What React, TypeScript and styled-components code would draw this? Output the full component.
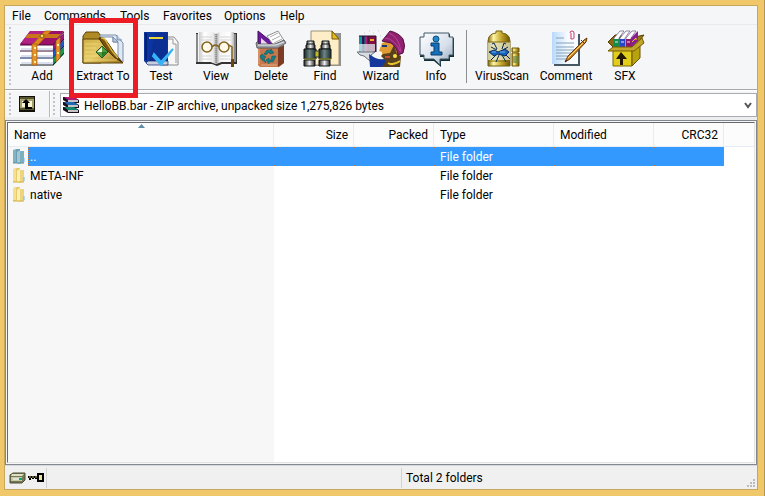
import React from 'react';
import styled, { createGlobalStyle } from 'styled-components';

const GlobalStyle = createGlobalStyle`
  * { box-sizing: border-box; }
  body {
    margin: 0;
    background: #f0c869;
    color: #000;
    font: 12px/18px Roboto, 'Segoe UI', sans-serif;
  }
  button, select { font: inherit; color: inherit; }
  svg { display: block; flex: none; }
`;

const Desktop = styled.div`
  display: flex;
  min-height: 100vh;
  padding: 5px 6px 6px 4px;
  border-right: 1px solid #b3974f;
`;

const Window = styled.main`
  display: flex;
  flex: 1;
  flex-direction: column;
  min-width: 0;
  border: 1px solid #c6a75c;
  background: #f5f6f8;
`;

const MenuBar = styled.nav`
  display: flex;
  gap: 14px;
  height: 19px;
  padding-left: 7px;
  border-bottom: 1px solid #e9eaec;
`;

const MenuItem = styled.button<{ $width: number }>`
  width: ${p => p.$width}px;
  padding: 1px 0 0;
  border: 0;
  background: none;
  text-align: left;
  white-space: nowrap;
`;

const Toolbar = styled.div`
  display: flex;
  height: 65px;
  padding-left: 4px;
  border-bottom: 1px solid #a7a8ae;
`;

const Grip = styled.span`
  flex: none;
  width: 2px;
  margin: 2px 2px 2px 0;
  background: repeating-linear-gradient(#c3c4c7 0 2px, transparent 2px 4px);
`;

const ToolButton = styled.button<{ $width: number }>`
  position: relative;
  display: flex;
  flex: none;
  flex-direction: column;
  align-items: center;
  width: ${p => p.$width}px;
  padding: 5px 0 0;
  border: 0;
  background: none;
  white-space: nowrap;
`;

const Highlight = styled.span`
  position: absolute;
  z-index: 2;
  inset: -7px -3px -9px -2px;
  border: 5px solid #ed1c24;
  pointer-events: none;
`;

const Separator = styled.span`
  flex: none;
  width: 1px;
  margin: 5px 3px 6px;
  background: #8d8e92;
`;

const AddressBar = styled.div`
  display: flex;
  height: 30px;
  padding-left: 4px;
  border-top: 1px solid #fff;
  border-bottom: 3px solid #eceef0;
`;

const UpButton = styled.button`
  flex: none;
  align-self: flex-start;
  width: 36px;
  padding: 5px 0 0 6px;
  border: 0;
  background: none;
`;

const BarDivider = styled.span`
  flex: none;
  width: 2px;
  margin-right: 2px;
  border-left: 1px solid #b5b6ba;
  background: #fff;
`;

const Combo = styled.label`
  position: relative;
  display: flex;
  flex: 1;
  align-items: center;
  gap: 5px;
  height: 24px;
  margin: 2px 0 0 3px;
  padding-left: 2px;
  border: 1px solid #a9aab2;
  background: #fff;
`;

const ComboSelect = styled.select`
  flex: 1;
  min-width: 0;
  height: 22px;
  padding: 1px 0 0;
  border: 0;
  outline: 0;
  appearance: none;
  background: none;
`;

const ComboArrow = styled.svg`
  position: absolute;
  right: 4px;
  top: 8px;
  pointer-events: none;
`;

const ListFrame = styled.section`
  display: flex;
  flex: 1;
  padding: 1px;
  border: 1px solid #828790;
  background: #f5f6f8;
`;

const ListView = styled.div`
  flex: 1;
  min-width: 0;
  border: 1px solid #e3e3e3;
  border-top-color: #696969;
  border-left-color: #696969;
  background: linear-gradient(#f7f7f7, #f7f7f7) 0 0 / 266px 100% no-repeat #fff;
`;

const FileTable = styled.table`
  width: 100%;
  table-layout: fixed;
  border-collapse: separate;
  border-spacing: 0;
`;

const Column = styled.col<{ $width?: number }>`
  width: ${p => (p.$width ? `${p.$width}px` : 'auto')};
`;

const HeadCell = styled.th<{ $right?: boolean; $last?: boolean }>`
  position: relative;
  height: 24px;
  padding: 0 5px 0 6px;
  border-right: ${p => (p.$last ? '0' : '1px solid #e2edf7')};
  border-bottom: 1px solid #e5edf7;
  background: #fcfcfc;
  font-weight: 400;
  text-align: ${p => (p.$right ? 'right' : 'left')};
`;

const SortArrow = styled.svg`
  position: absolute;
  top: 1px;
  left: calc(50% - 3px);
`;

const Row = styled.tr<{ $selected?: boolean }>`
  color: ${p => (p.$selected ? '#fff' : '#000')};
  --fill: ${p => (p.$selected ? '#3399ff' : 'transparent')};
  --edge: ${p => (p.$selected ? '#c87a3c' : 'transparent')};
`;

const Cell = styled.td<{ $end?: boolean }>`
  height: 19px;
  padding: 2px 6px 0;
  border: 0 dotted var(--edge);
  border-width: 1px ${p => (p.$end ? '1px' : '0')} 1px 0;
  background: var(--fill);
  line-height: 15px;
`;

const NameCell = styled.td`
  padding: 0 0 0 4px;
`;

const NameContent = styled.div`
  display: flex;
  align-items: center;
  gap: 1px;
`;

const NameLabel = styled.span`
  flex: 1;
  height: 19px;
  padding: 2px 0 0 1px;
  border: 1px dotted var(--edge);
  border-right: 0;
  background: var(--fill);
  line-height: 15px;
`;

const StatusBar = styled.footer`
  display: grid;
  grid-template-columns: 42px 1fr 1fr;
  height: 24px;
  padding: 2px 0 1px;
  border-top: 1px solid #d9d9dc;
  background: #f0f0f0;
`;

const StatusPane = styled.div<{ $end?: boolean }>`
  position: relative;
  display: flex;
  align-items: center;
  gap: 2px;
  padding-left: 4px;
  border-right: ${p => (p.$end ? '0' : '1px solid #d3d3d3')};
`;

const ResizeGrip = styled.svg`
  position: absolute;
  right: 2px;
  bottom: 1px;
`;

const Art = ({ children }: { children: React.ReactNode }) => (
  <svg width="48" height="37" viewBox="0 0 48 37" aria-hidden="true">{children}</svg>
);

const AddIcon = () => (
  <Art>
    {[0, 7, 14].map((y, i) => (
      <g key={y}>
        <path d={`M3 ${15 + y}h32v6H3q-2-3 0-6z`} fill="#fff" />
        <path d={`M3 ${19 + y}h32`} stroke="#b5c0dc" />
        <path d={`M2 ${21 + y}h33`} stroke={['#43103a', '#071f63', '#101820'][i]} />
        <path d={`M35 ${14 + y}l11-11v7l-11 12z`} fill={['#9b1a78', '#1c55c8', '#139a4e'][i]} />
        <path d={`M35 ${21 + y}l11-12`} stroke="#10193a" />
      </g>
    ))}
    <path d="M2 14L12 1h34L35 15H3z" fill="#9b1069" />
    <path d="M3 13L13 1h15l-9 13z" fill="#b32383" />
    <path d="M2 15h33L46 2" fill="none" stroke="#4b0939" />
    <path d="M27 1h6L20 15h-6z" fill="#df8a1c" stroke="#a65c0a" strokeWidth=".7" />
    <path d="M10 4h33l-4 4H7z" fill="#c9761a" />
    <path d="M14 14h5v21h-5zM38 11l4-4v21l-4 4z" fill="#e3942a" stroke="#a65c0a" strokeWidth=".7" />
    <circle cx="24" cy="6" r="2" fill="#ffd45e" stroke="#81510b" />
    <path d="M16 18h2m-2 7h2m-2 7h2m22-18v2m0 6v2" stroke="#fff0a2" strokeWidth="2" />
  </Art>
);

const ExtractIcon = () => (
  <Art>
    <defs>
      <linearGradient id="folderGold" x2="1" y2="1"><stop stopColor="#cfae45" /><stop offset=".5" stopColor="#e6cb68" /><stop offset="1" stopColor="#9b7118" /></linearGradient>
    </defs>
    <path d="M4 6l3-4h12l3 4v27H4z" fill="#b08a24" stroke="#5d4206" />
    <path d="M21 5h16l7 8v19H21z" fill="#dfe8f6" stroke="#7d8fa8" />
    <path d="M20 7h14v5h5v18H26z" fill="#fff" stroke="#7d8fa8" />
    <path d="M34 7l5 5h-5zM38 5v5h5" fill="#b9cae2" stroke="#60779a" strokeWidth=".7" />
    <path d="M4 9h16q10 11 24 24H4z" fill="url(#folderGold)" stroke="#5d4206" />
    <path d="M20 8q4-2 9 5 6 10 14 19Q30 26 20 8z" fill="#7a5509" stroke="#432c02" />
    <path d="M22 8q4 0 6 5 5 9 11 15" fill="none" stroke="#ddb744" strokeWidth="1.500" />
    <path d="M6 14h13M6 18h11M6 22h10M6 26h13M6 30h32" stroke="#f6e38d" opacity=".65" />
    <path d="M17 22l6-6 6 6-6 6z" fill="#4d9c3d" stroke="#255b20" />
    <path d="M18 22l5-5v5z" fill="#f4f8df" /><path d="M23 22h5l-5 5z" fill="#2a7627" />
  </Art>
);

const TestIcon = () => (
  <Art>
    <path d="M25 7h12l4 5v23H25z" fill="#f7f7f7" stroke="#8a8a8a" />
    <path d="M31 9h5v5h3v19" fill="none" stroke="#999" />
    <path d="M7 2h24v31H9l-2-2z" fill="#0b369f" />
    <path d="M8 3h2v27H8z" fill="#001f70" />
    <path d="M18 3h12v28H12z" fill="#0b2b8c" opacity=".6" />
    <path d="M9 33l2-2h20v4H11z" fill="#c6cede" stroke="#0a2470" strokeWidth=".7" />
    <path d="M12 8h14" stroke="#e9d63b" strokeWidth="2" />
    <path d="M17 24l7 8 12-13-12 16-8-9z" fill="#fff" stroke="#37b3f5" strokeWidth="2" />
  </Art>
);

const ViewIcon = () => (
  <Art>
    <defs><linearGradient id="pages"><stop stopColor="#c8c8c8" /><stop offset=".15" stopColor="#fff" /><stop offset=".4" stopColor="#ececec" /><stop offset=".5" stopColor="#a8a8a8" /><stop offset=".6" stopColor="#f4f4f4" /><stop offset=".88" stopColor="#fff" /><stop offset="1" stopColor="#b9b9b9" /></linearGradient></defs>
    <path d="M4 3h2v29h13l5 2 5-2h13V3h3v31H30l-5 2-5-2H4z" fill="#343434" />
    <path d="M7 2h13l4 2 4-2h14v30H29l-5 2-5-2H7z" fill="url(#pages)" />
    <path d="M5 4v28M43 4v28" stroke="#ddd" />
    <path d="M24 4v29" stroke="#777" strokeDasharray="1 1" />
    <path d="M9 7h11M9 10h11M9 26h11M9 29h11M28 7h11M28 10h11M28 26h10M28 29h10" stroke="#d4d4d4" />
    <g fill="none" stroke="#80631d"><circle cx="15" cy="17" r="5" fill="#fff8df" fillOpacity=".7" strokeWidth="1.500" /><circle cx="32" cy="17" r="5" fill="#fff8df" fillOpacity=".7" strokeWidth="1.500" /><path d="M20 17q3-4 7 0m10-2l3 2v15" strokeWidth="1.500" /></g>
    <path d="M39 29h3v8h-3z" fill="#69470c" />
  </Art>
);

const DeleteIcon = () => (
  <Art>
    <path d="M11 1l20 16H11z" fill="#6d1b99" stroke="#40095f" />
    <path d="M14 8v6h7z" fill="#e7dcf0" />
    <path d="M20 6l11-5 7 11-11 4z" fill="#fff" stroke="#8f8f8f" />
    <path d="M23 7l8-4m-6 7l8-4m-6 7l8-4" stroke="#aaa" />
    <path d="M11 17h26v16l-5 4H13l-2-2z" fill="#c6794e" />
    <path d="M31 18l6-3v18l-6 4z" fill="#7c3c23" />
    <path d="M12 18v16M14 35h16" stroke="#e7aa83" />
    <path d="M9 13l2-2v3h17l9-4 2 3-8 5H10z" fill="#9da1a7" stroke="#4a4d52" strokeWidth=".8" />
    <path d="M11 15h18l8-3" fill="none" stroke="#eee" />
    <path d="M17 24l3-4h4v-1l3 4-4 1-1-2-3 3zM25 26h4l-3 6h-4v2l-3-4 3-2v2h2zM15 24l4 3-2 1 2 5-5-4-1-3z" fill="#127f88" stroke="#075760" strokeWidth=".5" />
  </Art>
);

const FindIcon = () => (
  <Art>
    <path d="M12 3h28v33H12z" fill="#2c2c2c" opacity=".5" />
    <path d="M10 1h21l7 8v26H10z" fill="#fdeec7" stroke="#9c9278" />
    <path d="M31 1v8h7z" fill="#e9bc19" stroke="#71540d" />
    <defs><linearGradient id="barrel"><stop stopColor="#182427" /><stop offset=".45" stopColor="#6d8583" /><stop offset="1" stopColor="#1a2a2d" /></linearGradient><linearGradient id="steel"><stop stopColor="#222" /><stop offset=".5" stopColor="#eee" /><stop offset="1" stopColor="#222" /></linearGradient></defs>
    {[2, 17].map(x => (
      <g key={x} stroke="#101617">
        <path d={`M${x + 4} 11h7v4h1v4H${x + 3}v-4h1z`} fill="url(#steel)" />
        <path d={`M${x + 1} 19h12v10H${x + 1}z`} fill="url(#barrel)" />
        <path d={`M${x + 1} 30h11v6H${x + 1}z`} fill="url(#steel)" />
        <path d={`M${x + 3} 14h9`} />
        <path d={`M${x + 1} 29h12`} stroke="#9c9d24" />
      </g>
    ))}
    <path d="M14 21h4v6h-4z" fill="#c2b82c" stroke="#333" />
  </Art>
);

const WizardIcon = () => (
  <Art>
    <path d="M2 6h6v16H2z" fill="#14949a" /><path d="M5 6h2v16H5z" fill="#30155c" /><path d="M8 6h3v16H8z" fill="#b21a7e" /><path d="M11 6h8v16h-8z" fill="#831044" />
    <path d="M2 6h17M7 6v16M11 6v16M19 6v16" fill="none" stroke="#24102e" />
    <path d="M13 10h4" stroke="#e8b52a" strokeWidth="2" />
    <path d="M2 14h16v7q-8 5-16 0z" fill="#e1edf0" opacity=".75" />
    <path d="M0 22h18l-4 3 2 4-3 2-6-5-4-1z" fill="#d7dce1" stroke="#67727b" />
    <path d="M12 24q10 8 18 4l8 9H13z" fill="#16379c" />
    <path d="M25 13l8-3 9 12-3 6-7 3-7-4v-5l-3-1z" fill="#df9c35" />
    <path d="M26 24l7-1 4-8 3 9 4 2-1 11H25l4-6-5-5z" fill="#59401c" />
    <path d="M28 27h5" stroke="#c1533a" strokeWidth="2" />
    <path d="M33 1q9 2 13 8 3 7 0 14l-5 2q-1-8-7-12l-9-2z" fill="#8f216f" stroke="#521040" />
    <path d="M32 3q10 4 12 19M28 8q10 1 15 13" fill="none" stroke="#bd4298" />
    <path d="M25 16h5" stroke="#173a70" strokeWidth="2" /><circle cx="38" cy="26" r="2" fill="#ffe13a" />
    <path d="M31 33q5 3 12-2" fill="none" stroke="#e5c72b" strokeWidth="2" />
    <path d="M7 3h1m4-2h1m3 2h1m4-2h1m1 5h1" stroke="#c5cbd2" />
  </Art>
);

const InfoIcon = () => (
  <Art>
    <defs><linearGradient id="speech" x2="1" y2="1"><stop stopColor="#fff" /><stop offset=".6" stopColor="#d5deea" /><stop offset="1" stopColor="#8da0b1" /></linearGradient></defs>
    <path d="M13 4h25v4h4v19h-4v4H29v6l-7-6H12v-4H8V8h5z" fill="#142d32" />
    <path d="M12 3h25v4h4v18h-4v4h-9v6l-6-6H12v-4H8V7h4z" fill="url(#speech)" stroke="#3e5869" />
    <circle cx="24" cy="9" r="3" fill="#2588c9" stroke="#08507f" />
    <path d="M19 13h8v9h3v3H19v-3h3v-6h-3z" fill="#1671b8" stroke="#073d70" />
  </Art>
);

const VirusIcon = () => (
  <Art>
    <defs><linearGradient id="brass"><stop stopColor="#806711" /><stop offset=".25" stopColor="#fff6a4" /><stop offset=".6" stopColor="#c6a72c" /><stop offset="1" stopColor="#6b5206" /></linearGradient></defs>
    <path d="M18 3V1h6v2l4 1q4 2 4 7v25H10V11q0-5 4-7z" fill="url(#brass)" stroke="#75600e" />
    <path d="M10 12h22v18H10z" fill="#dedfbf" opacity=".8" />
    <path d="M10 12h22M10 31h22" stroke="#806b12" />
    <path d="M19 19l-3-6-2 1m5 6l-6-3m11 2l2-6 2 1m-3 6l5-3m-12 8l-5 5m8-5l-3 7m6-7l4 7m-1-8l5 5" fill="none" stroke="#092855" />
    <path d="M11 22l5-2 4 2 7-3 4 3-4 4-7-2-4 2z" fill="#1762bd" stroke="#082c61" />
    <path d="M14 22h4m4 0h5" stroke="#6db3ee" />
    <path d="M34 18h7v4h-7zM34 23h7v13h-7z" fill="url(#brass)" stroke="#755c0b" /><path d="M35 26h6v7h-6z" fill="#5d804d" opacity=".6" />
  </Art>
);

const CommentIcon = () => (
  <Art>
    <defs><linearGradient id="note"><stop stopColor="#b9d8fa" /><stop offset=".6" stopColor="#f8fbff" /></linearGradient></defs>
    <path d="M12 4h26v32H12z" fill="#465866" />
    <path d="M10 2h26v32H10z" fill="url(#note)" />
    <path d="M14 8h8M14 13h18M14 17h18M14 20h18M14 23h16M14 26h13M14 29h10" stroke="#82a2bc" />
    <path d="M28 3q0-2 2-2t2 2v5q0 1-2 1t-1-1V3" fill="none" stroke="#c73668" />
    <path d="M23 32l3-6L42 10l3-2-1 4-16 17z" fill="#cf832a" stroke="#683806" />
    <path d="M26 28l17-17" stroke="#ffdb73" /><path d="M39 10l4 4" stroke="#573007" /><path d="M23 32l1-2 1 1z" fill="#111" />
  </Art>
);

const SfxIcon = () => (
  <Art>
    <path d="M14 5h6v13h-7l-6-6z" fill="#8a6912" stroke="#574000" />
    <path d="M34 7l9-2-7 9-7 3z" fill="#9b7b17" stroke="#574000" />
    {['#138b4a', '#2846c8', '#8b176f'].map((c, i) => (
      <g key={c}><path d={`M${13 + i * 6} 8l6-7h4l-5 7v10h-5z`} fill="#fff" stroke="#6a5680" strokeWidth=".7" /><path d={`M${13 + i * 6} 9h5v9h-5z`} fill={c} /><path d={`M${14 + i * 6} 12h3`} stroke="#eee" /></g>
    ))}
    <path d="M30 8l7-7v10l-7 7z" fill="#8b1f90" /><path d="M31 12l4-4v2" stroke="#e6c72f" fill="none" />
    <path d="M12 19h19v17H12z" fill="#e2ce1a" stroke="#786605" />
    <path d="M31 19l8-6v15l-8 8z" fill="#b9a30c" stroke="#695406" />
    <path d="M7 21l5-4h19l10-9 2 5-10 8z" fill="#c2a62b" stroke="#765c02" />
    <path d="M20 22l6 7h-4v6h-3v-6h-4z" fill="#241703" />
  </Art>
);

const UpIcon = () => (
  <svg width="16" height="16" viewBox="0 0 16 16" aria-hidden="true">
    <path d="M0 0h16v16H0z" fill="#11110b" /><path d="M1 1h14v13H1z" fill="#57552e" /><path d="M1 3h14v9H1z" fill="#a5a16c" /><path d="M3 5h10v6H3z" fill="#f7f5cf" />
    <path d="M7 3l4 4H9v4h4v2H6V7H3z" fill="#000" />
  </svg>
);

const BooksIcon = () => (
  <svg width="16" height="16" viewBox="0 0 16 16" aria-hidden="true">
    {['#b21a7b', '#2068b0', '#14856a'].map((c, i) => (
      <g key={c}>
        <path d={`M0 ${i * 5}h11l5 3v3H5L0 ${i * 5 + 3}z`} fill="#1c1020" />
        <path d={`M1 ${i * 5}h10l4 3H5z`} fill={c} />
        <path d={`M5 ${4 + i * 5}h10`} stroke="#fff" strokeWidth="1.500" />
      </g>
    ))}
  </svg>
);

const FolderIcon = ({ blue }: { blue?: boolean }) => (
  <svg width="15" height="17" viewBox="0 0 15 17" aria-hidden="true">
    <path d="M1 2l4-1h3v14H1z" fill={blue ? '#6b9eb3' : '#e5cb6e'} /><path d="M6 3h6v12l-6 1z" fill={blue ? '#7eafc0' : '#eed47d'} />
    <path d="M1 2h3v12H1z" fill={blue ? '#82b3c3' : '#f7e08d'} /><path d="M5 4l3-2v12l-3 2z" fill={blue ? '#a4c8d2' : '#fff0b0'} />
    <path d="M1 15h11" stroke={blue ? '#679bad' : '#d4b34b'} fill="none" /><path d="M12 10v4" stroke="#74b8ec" />
  </svg>
);

const DriveIcon = () => (
  <svg width="17" height="12" viewBox="0 0 17 12" aria-hidden="true">
    <path d="M1 3l3-2h12v7l-3 3H1z" fill="#777955" stroke="#4e4f32" /><path d="M3 2h12l-2 2H2z" fill="#dfe0c2" /><path d="M2 5h11v4H2z" fill="#c6c8aa" /><path d="M4 7h6" stroke="#fff" /><path d="M10 7h3" stroke="#00aa89" strokeWidth="2" />
  </svg>
);

const KeyIcon = () => (
  <svg width="16" height="10" viewBox="0 0 16 10" aria-hidden="true">
    <path d="M0 4h10M2 4v3m3-3v2m3-2v2" stroke="#000" strokeWidth="2" /><path d="M10 1h5v7h-5z" fill="#e9e3a3" stroke="#000" strokeWidth="2" /><path d="M1 4h8" stroke="#b8ad50" strokeDasharray="2 1" />
  </svg>
);

const menus: [string, number][] = [['File', 18], ['Commands', 62], ['Tools', 29], ['Favorites', 47], ['Options', 42], ['Help', 26]];

type Tool = { label: string; width: number; Icon: () => React.ReactElement; marked?: boolean };

const archiveTools: Tool[] = [
  { label: 'Add', width: 58, Icon: AddIcon },
  { label: 'Extract To', width: 64, Icon: ExtractIcon, marked: true },
  { label: 'Test', width: 52, Icon: TestIcon },
  { label: 'View', width: 58, Icon: ViewIcon },
  { label: 'Delete', width: 52, Icon: DeleteIcon },
  { label: 'Find', width: 56, Icon: FindIcon },
  { label: 'Wizard', width: 56, Icon: WizardIcon },
  { label: 'Info', width: 54, Icon: InfoIcon },
];

const extraTools: Tool[] = [
  { label: 'VirusScan', width: 64, Icon: VirusIcon },
  { label: 'Comment', width: 64, Icon: CommentIcon },
  { label: 'SFX', width: 54, Icon: SfxIcon },
];

const columns = [
  { label: 'Name', width: 266 },
  { label: 'Size', width: 80, right: true },
  { label: 'Packed', width: 80, right: true },
  { label: 'Type', width: 120 },
  { label: 'Modified', width: 100 },
  { label: 'CRC32', width: 70, right: true },
];

const files = ['..', 'META-INF', 'native'];

const ToolItem = ({ label, width, Icon, marked }: Tool) => (
  <ToolButton type="button" $width={width}>
    <Icon />
    {label}
    {marked && <Highlight />}
  </ToolButton>
);

export default function App() {
  return (
    <>
      <GlobalStyle />
      <Desktop>
        <Window>
          <MenuBar>
            {menus.map(([name, width]) => <MenuItem key={name} type="button" $width={width}>{name}</MenuItem>)}
          </MenuBar>
          <Toolbar>
            <Grip />
            {archiveTools.map(tool => <ToolItem key={tool.label} {...tool} />)}
            <Separator />
            {extraTools.map(tool => <ToolItem key={tool.label} {...tool} />)}
          </Toolbar>
          <AddressBar>
            <Grip />
            <UpButton type="button" aria-label="Up one level"><UpIcon /></UpButton>
            <BarDivider />
            <Grip />
            <Combo>
              <BooksIcon />
              <ComboSelect aria-label="Current folder">
                <option>HelloBB.bar - ZIP archive, unpacked size 1,275,826 bytes</option>
              </ComboSelect>
              <ComboArrow width="8" height="7" viewBox="0 0 8 7" aria-hidden="true">
                <path d="M1 1l3 4 3-4" fill="none" stroke="#555" strokeWidth="2" />
              </ComboArrow>
            </Combo>
          </AddressBar>
          <ListFrame>
            <ListView>
              <FileTable>
                <colgroup>
                  {columns.map(c => <Column key={c.label} $width={c.width} />)}
                  <Column />
                </colgroup>
                <thead>
                  <tr>
                    {columns.map((c, i) => (
                      <HeadCell key={c.label} scope="col" $right={c.right}>
                        {c.label}
                        {i === 0 && (
                          <SortArrow width="7" height="4" viewBox="0 0 7 4" aria-hidden="true">
                            <path d="M0 4l3.500-4L7 4z" fill="#5d8ea8" />
                          </SortArrow>
                        )}
                      </HeadCell>
                    ))}
                    <HeadCell as="td" $last />
                  </tr>
                </thead>
                <tbody>
                  {files.map((name, i) => (
                    <Row key={name} $selected={i === 0}>
                      <NameCell>
                        <NameContent><FolderIcon blue={i === 0} /><NameLabel>{name}</NameLabel></NameContent>
                      </NameCell>
                      <Cell />
                      <Cell />
                      <Cell>File folder</Cell>
                      <Cell />
                      <Cell $end />
                      <td />
                    </Row>
                  ))}
                </tbody>
              </FileTable>
            </ListView>
          </ListFrame>
          <StatusBar>
            <StatusPane><DriveIcon /><KeyIcon /></StatusPane>
            <StatusPane />
            <StatusPane $end>
              Total 2 folders
              <ResizeGrip width="8" height="8" viewBox="0 0 8 8" aria-hidden="true">
                <path d="M6 0h2v2H6zM3 3h2v2H3zM6 3h2v2H6zM0 6h2v2H0zM3 6h2v2H3zM6 6h2v2H6z" fill="#bcbcbc" />
              </ResizeGrip>
            </StatusPane>
          </StatusBar>
        </Window>
      </Desktop>
    </>
  );
}
